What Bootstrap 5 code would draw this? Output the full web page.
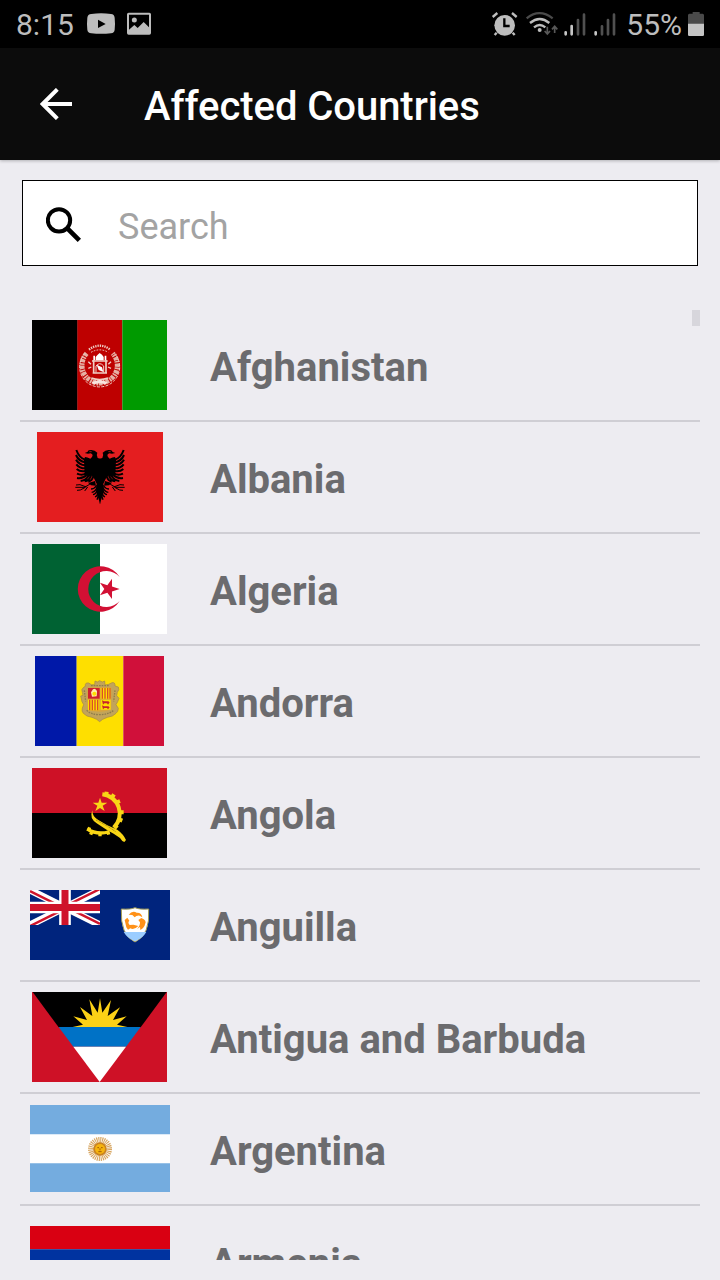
<!DOCTYPE html>
<html lang="en">
<head>
<meta charset="utf-8">
<meta name="viewport" content="width=device-width, initial-scale=1">
<title>Affected Countries</title>
<link href="https://cdn.jsdelivr.net/npm/bootstrap@5.3.0/dist/css/bootstrap.min.css" rel="stylesheet">
<style>
  body { width: 720px; height: 1280px; overflow: hidden; background: #edecf1; font-family: Roboto, "Liberation Sans", sans-serif; }
  svg { display: block; flex: none; }
  .status-bar { height: 48px; background: #000; color: #bdbdbd; font-size: 30px; line-height: 48px; padding: 2px 15px 0 16px; }
  .left-icons { margin: -2px 0 0 12px; }
  .right-icons { margin: -2px 7px 0 0; }
  .battery { margin: -3px 0 0 5px; }
  .app-bar { height: 112px; background: #0c0c0c; padding-left: 40px; box-shadow: 0 1px 3px rgba(0,0,0,.25); }
  .app-title { font-size: 40px; font-weight: 500; line-height: 48px; margin: 6px 0 0 72px; letter-spacing: -.06px; }
  .search-box { height: 86px; margin: 20px 22px 0; border: 1px solid #000; padding-left: 23px; }
  .search-box svg { margin-top: 3px; }
  .search-box input { font-size: 36px; line-height: 44px; padding: 0; margin: 7px 0 0 36px; border: 0; background: none; color: #333; outline: 0; }
  .search-box input::placeholder { color: #a3a3a3; opacity: 1; }
  .countries { height: 950px; margin: 44px 20px 0; overflow: hidden; }
  .country { height: 112px; border-bottom: 2px solid #cfced4; padding-left: 10px; flex: none; }
  .flag { width: 140px; height: 90px; flex: none; }
  .flag svg[width="135"], .flag svg[width="129"] { margin-left: -1px; }
  .flag svg[height="87"] { margin-top: -1px; }
  .country-name { font-size: 40px; font-weight: 700; color: #6b6b6e; line-height: 48px; margin: 5px 0 0 40px; white-space: nowrap; }
  .thumb { width: 8px; height: 16px; background: #d7d6dc; top: 0; right: 0; }
</style>
</head>
<body>
<header>
  <div class="status-bar d-flex align-items-center justify-content-between">
    <div class="d-flex align-items-center">
      <span>8:15</span>
      <svg class="left-icons" width="68" height="24" viewBox="258 37 204 72" fill="#bdbdbd">
        <path d="M274 43Q303 39 333 43Q343 44 344 54Q346 72 344 90Q343 100 333 101Q303 104 274 101Q263 100 262 90Q260 72 262 54Q263 44 274 43Z"/>
        <path d="M294 60L317 73L294 85Z" fill="#000"/>
        <path fill-rule="evenodd" d="M386 39H448Q453 39 453 44V100Q453 105 448 105H386Q381 105 381 100V44Q381 39 386 39ZM387 45V90L403 76L413 85L431 67L447 83V45Z"/>
        <circle cx="403" cy="61" r="7.5"/>
      </svg>
    </div>
    <div class="d-flex align-items-center">
      <svg class="right-icons" width="128" height="26" viewBox="33 33 384 78" fill="#bdbdbd">
        <circle cx="74" cy="76" r="31"/>
        <path d="M38 51L52 39M110 51L96 39M50 98L44 105M98 98L104 105" fill="none" stroke="#bdbdbd" stroke-width="7"/>
        <path d="M73 55V78H89" fill="none" stroke="#000" stroke-width="7"/>
        <g fill="none" stroke-width="7">
          <path d="M140 55Q178 24 218 55" stroke="#4a4a4a"/>
          <path d="M150 69Q179 45 208 69M162 82Q179 68 196 82" stroke="#bdbdbd"/>
        </g>
        <circle cx="179" cy="90" r="6"/>
        <path d="M202 80V102M194 93L202 102L210 93M224 99V80M216 88L224 79L232 88" fill="none" stroke="#585858" stroke-width="5"/>
        <g fill="none" stroke-width="8" stroke-linecap="round">
          <path d="M257 97V103M275 78V103M347 97V103" stroke="#c6c6c6"/>
          <path d="M294 60V103M312 44V103M366 79V103M384 60V103M402 44V103" stroke="#505050"/>
        </g>
      </svg>
      <span>55%</span>
      <svg class="battery" width="18" height="24" viewBox="621 36 54 72">
        <path d="M638 36H659V41H668Q672 41 672 46V72H624V46Q624 41 628 41H638Z" fill="#4a4a4a"/>
        <path d="M624 71H672V104Q672 108 668 108H628Q624 108 624 104Z" fill="#c4c4c4"/>
      </svg>
    </div>
  </div>
  <nav class="app-bar d-flex align-items-center text-white">
    <svg width="32" height="32" viewBox="120 264 96 96" fill="none" stroke="#fff" stroke-width="12"><path d="M216 312H132M172 268L128 312L172 356"/></svg>
    <h1 class="app-title">Affected Countries</h1>
  </nav>
</header>
<main>
  <div class="search-box d-flex align-items-center bg-white">
    <svg width="36" height="36" viewBox="108 110 108 108" fill="none" stroke="#000"><circle cx="147" cy="150" r="33.500" stroke-width="12"/><path d="M172 174L208 210" stroke-width="14"/></svg>
    <input type="text" placeholder="Search" aria-label="Search">
  </div>
  <div class="countries d-flex flex-column position-relative">
    <div class="thumb position-absolute"></div>

    <div class="country d-flex align-items-center">
      <div class="flag d-flex align-items-center justify-content-center">
        <svg width="135" height="90" viewBox="36 30 405 270">
          <path fill="#000" d="M36 30H173V300H36Z"/><path fill="#be0000" d="M172 30H307V300H172Z"/><path fill="#009a00" d="M307 30H441V300H307Z"/>
          <g fill="none" stroke="#f0cfc6">
            <path d="M200 130A53 53 0 1 0 278 130" stroke-width="15" stroke-dasharray="10 3 5 2" stroke="#e6b0a4"/>
            <path d="M195 130A60 60 0 1 0 283 130" stroke-width="3" stroke-dasharray="9 4"/>
            <path d="M207 119Q239 95 271 119" stroke-width="7" stroke-dasharray="4 3"/>
            <path d="M213 127Q239 112 265 127" stroke-width="3" stroke-dasharray="5 4"/>
            <path d="M221 150V190M258 150V190M216 153H263M218 189H261" stroke-width="5"/>
            <path d="M228 188V168Q239 154 251 168V188" stroke-width="3"/>
            <path d="M205 155L213 163M205 175L214 171M273 155L265 163M273 175L264 171" stroke-width="4"/>
            <path d="M214 204Q239 213 264 204" stroke-width="5"/>
          </g>
          <path fill="#fff" d="M227 151V141L233 134L239 129L246 134L251 141V151ZM220 137H225V150H220ZM254 137H259V150H254ZM230 164L246 172L250 186L236 180Z"/>
          <path fill="#f8e4df" d="M215 216L239 209L263 216L257 223L239 220L221 223Z"/>
        </svg>
      </div>
      <div class="country-name">Afghanistan</div>
    </div>

    <div class="country d-flex align-items-center">
      <div class="flag d-flex align-items-center justify-content-center">
        <svg width="126" height="90" viewBox="51 21 378 270">
          <path fill="#e41e20" d="M51 21H429V291H51Z"/>
          <g id="eagle-half">
            <path d="M241 101L233 99Q228 90 232 83Q222 72 206 76L202 81L194 84L204 86L212 85Q221 89 216 96L211 101Q202 96 195 96L192 105L194 148Q205 158 216 152L222 160L230 176L229 202L241 238Z"/>
            <g fill="none" stroke="#000" stroke-width="6">
              <path d="M196 104Q178 100 169 75M196 112Q176 109 168 90M196 121Q177 119 168 104M196 130Q178 130 169 118M196 138Q180 141 170 132M197 146Q184 152 171 146M200 150Q188 162 171 159M206 151Q199 166 182 168M213 152Q208 167 194 169M220 154Q216 168 205 170"/>
            </g>
            <g fill="none" stroke="#000" stroke-width="4">
              <path d="M231 181Q222 192 213 192M231 187Q226 201 215 202M232 193Q229 207 219 209M234 202Q232 213 225 216M236 209L231 224"/>
              <path d="M222 172Q211 174 204 181L193 187L166 187M199 186L180 179L168 180M196 187L181 195L171 196M203 186L194 198" stroke-width="3"/>
            </g>
            <path d="M205 174L225 168L228 182L213 181Z"/>
            <path d="M208 80H215" stroke="#e41e20" stroke-width="2"/>
          </g>
          <use href="#eagle-half" transform="translate(480 0) scale(-1 1)"/>
        </svg>
      </div>
      <div class="country-name">Albania</div>
    </div>

    <div class="country d-flex align-items-center">
      <div class="flag d-flex align-items-center justify-content-center">
        <svg width="135" height="90" viewBox="36 21 405 270">
          <path fill="#fff" d="M36 21H441V291H36Z"/><path fill="#006233" d="M36 21H240V291H36Z"/>
          <path fill="#d21034" d="M299 120A68 68 0 1 0 299 192A54 54 0 1 1 299 120Z"/>
          <path fill="#d21034" d="M299 156L276 163.500L276 186L262 167L240 174.500L253 156L240 137.500L262 145L276 125L276 148.500Z"/>
        </svg>
      </div>
      <div class="country-name">Algeria</div>
    </div>

    <div class="country d-flex align-items-center">
      <div class="flag d-flex align-items-center justify-content-center">
        <svg width="129" height="90" viewBox="45 18 387 270">
          <path fill="#0018a8" d="M45 18H170V288H45Z"/><path fill="#fedf00" d="M170 18H310V288H170Z"/><path fill="#d0103a" d="M310 18H432V288H310Z"/>
          <path fill="#c2a45a" stroke="#a18748" stroke-width="2" d="M225 93L232 96L239 92L247 96L254 93L255 105L266 103L276 98Q286 96 285 108L295 111Q299 119 292 127L290 137L297 145L293 155L288 164L295 175Q295 185 288 190L277 198L262 202L248 208L239 215L230 208L216 202L201 198L190 190Q184 184 187 174L191 164L186 155L182 138L189 136L187 127Q182 118 192 111L196 109Q194 97 206 99L214 104L224 104Z"/>
          <path fill="none" stroke="#8f7d4c" stroke-width="4" stroke-dasharray="5 3" d="M200 181Q213 194 239 194T281 181M193 121L197 154M285 121L281 154M213 107H267"/>
          <path fill="#d9a43c" d="M202 112H274V178Q258 186 239 185Q216 186 202 178Z"/>
          <path fill="#cf202c" d="M204 114H239V146H204Z"/>
          <path fill="#fff0a8" d="M216 140L213 127L219 118L225 116L231 123L230 139Z"/><circle cx="223" cy="131" r="6" fill="#fedf00"/>
          <path fill="#fedf00" d="M242 114H272V146H242ZM204 149H238V181H204ZM242 149H272V179H242Z"/>
          <path stroke="#d9502a" stroke-width="4" d="M247 114V146M255 114V146M263 114V146M270 114V146M209 149V181M217 149V181M225 149V181M233 149V181"/>
          <path fill="#c7252c" d="M246 151L252 154H265L269 157L264 164L261 160H253L249 164ZM246 166L252 169H265L269 172L264 178L261 174H253L249 178Z"/>
        </svg>
      </div>
      <div class="country-name">Andorra</div>
    </div>

    <div class="country d-flex align-items-center">
      <div class="flag d-flex align-items-center justify-content-center">
        <svg width="135" height="90" viewBox="36 18 405 270">
          <path fill="#000" d="M36 18H441V288H36Z"/><path fill="#ce1126" d="M36 18H441V153H36Z"/>
          <g fill="none" stroke="#f9d616">
            <path d="M247 97A58 58 0 0 1 281 197" stroke-width="12"/>
            <path d="M260 89L259 97M282 97L277 105M300 117L292 120M311 151H301M307 176L297 172M292 198L285 192" stroke-width="12"/>
            <path d="M202 201Q229 219 266 210" stroke-width="10"/>
            <path d="M209 196L204 207M216 208L212 218M240 213V223M263 206L266 218" stroke-width="10"/>
          </g>
          <path fill="#f9d616" d="M240 107L245 122H262L248 131L254 147L240 138L226 147L232 131L218 122H235ZM217 145Q216 163 235 174L262 190L292 203Q311 217 318 234L313 240Q305 237 300 228L281 215L262 205L230 184Q207 169 217 145Z"/>
          <path fill="none" stroke="#715f10" stroke-width="2" stroke-dasharray="3 2" d="M228 174L263 193L287 209"/>
        </svg>
      </div>
      <div class="country-name">Angola</div>
    </div>

    <div class="country d-flex align-items-center">
      <div class="flag d-flex align-items-center justify-content-center">
        <svg width="140" height="70" viewBox="30 30 420 210">
          <path fill="#00247d" d="M30 30H450V240H30Z"/>
          <svg x="30" y="30" width="210" height="105" viewBox="0 0 60 30" preserveAspectRatio="none">
            <path d="M0 0L60 30M60 0L0 30" stroke="#fff" stroke-width="6"/>
            <path d="M0 1L30 16M30 14L60 29M60 -1L30 14M30 16L0 31" stroke="#cf142b" stroke-width="2"/>
            <path d="M30 0V30M0 15H60" stroke="#fff" stroke-width="10"/>
            <path d="M30 0V30M0 15H60" stroke="#cf142b" stroke-width="6"/>
          </svg>
          <path fill="#fff" stroke="#a29b55" stroke-width="3" d="M304 87Q331 89 345 83Q359 89 386 87Q391 165 345 186Q300 165 304 87Z"/>
          <path fill="#9bcdff" d="M311 156H379Q369 174 345 184Q321 174 311 156Z"/>
          <path fill="#ff9118" d="M326 104Q337 91 350 98Q365 97 367 112L359 107Q349 106 344 112L337 105ZM364 114Q382 121 375 133Q374 143 361 150L360 141L351 147Q361 136 360 127L355 120ZM355 138Q342 151 331 145L324 149L319 142L314 120L322 113L328 122Q322 127 329 135L340 134Z"/>
        </svg>
      </div>
      <div class="country-name">Anguilla</div>
    </div>

    <div class="country d-flex align-items-center">
      <div class="flag d-flex align-items-center justify-content-center">
        <svg width="135" height="90" viewBox="36 21 405 270">
          <path fill="#ce1126" d="M36 21H441V291H36Z"/><path fill="#000" d="M38 21H440L362 127H116Z"/>
          <path fill="#fcd116" d="M158 126L189 119L160 94L201 105L180 66L217 93L208 43L233 83L240 40L247 83L273 45L263 93L300 67L279 105L320 94L291 119L322 126Z"/>
          <path fill="#0072c6" d="M116 126H362L318 185H160Z"/><path fill="#fff" d="M160 185H318L239 291Z"/>
        </svg>
      </div>
      <div class="country-name">Antigua and Barbuda</div>
    </div>

    <div class="country d-flex align-items-center">
      <div class="flag d-flex align-items-center justify-content-center">
        <svg width="140" height="87" viewBox="30 21 420 261">
          <path fill="#74acdf" d="M30 21H450V282H30Z"/><path fill="#fff" d="M30 109H450V196H30Z"/>
          <circle cx="240" cy="153" r="26" fill="none" stroke="#d7a560" stroke-width="20" stroke-dasharray="3 2.100"/>
          <circle cx="240" cy="153" r="20" fill="#c98220"/><circle cx="240" cy="153" r="15" fill="#f6b40e"/>
          <path d="M232 149H237M243 149H248M240 151V157M235 161H245" stroke="#a65d00" stroke-width="3"/>
        </svg>
      </div>
      <div class="country-name">Argentina</div>
    </div>

    <div class="country d-flex align-items-center">
      <div class="flag d-flex align-items-center justify-content-center">
        <svg width="140" height="70" viewBox="0 0 420 210">
          <path fill="#d90012" d="M0 0H420V70H0Z"/><path fill="#0033a0" d="M0 70H420V140H0Z"/><path fill="#f2a800" d="M0 140H420V210H0Z"/>
        </svg>
      </div>
      <div class="country-name">Armenia</div>
    </div>
  </div>
</main>
<script src="https://cdn.jsdelivr.net/npm/bootstrap@5.3.0/dist/js/bootstrap.bundle.min.js"></script>
</body>
</html>
